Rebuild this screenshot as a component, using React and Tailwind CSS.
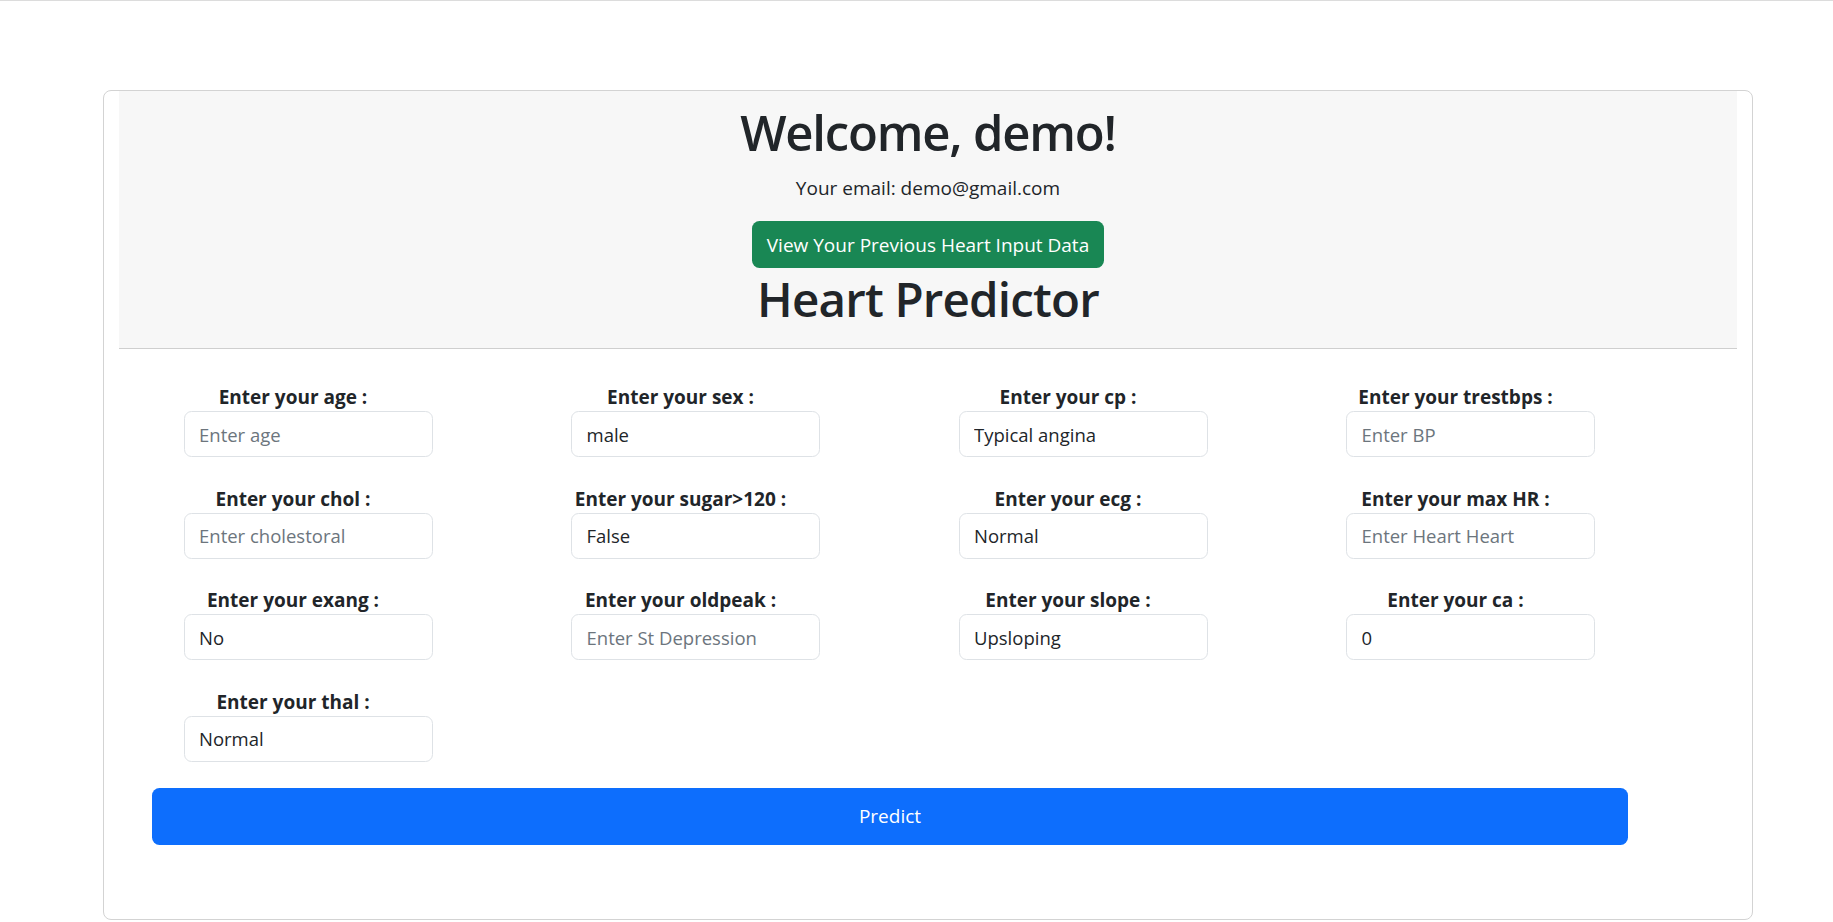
import React from 'react'

const fields = [
    { label: 'Enter your age :', placeholder: 'Enter age' },
    { label: 'Enter your sex :', value: 'male' },
    { label: 'Enter your cp :', value: 'Typical angina' },
    { label: 'Enter your trestbps :', placeholder: 'Enter BP' },
    { label: 'Enter your chol :', placeholder: 'Enter cholestoral' },
    { label: 'Enter your sugar>120 :', value: 'False' },
    { label: 'Enter your ecg :', value: 'Normal' },
    { label: 'Enter your max HR :', placeholder: 'Enter Heart Heart' },
    { label: 'Enter your exang :', value: 'No' },
    { label: 'Enter your oldpeak :', placeholder: 'Enter St Depression' },
    { label: 'Enter your slope :', value: 'Upsloping' },
    { label: 'Enter your ca :', value: '0' },
    { label: 'Enter your thal :', value: 'Normal' },
]

const Field = ({ label, value, placeholder }) => {
    return (
        <div className='flex flex-col'>
            <label className='w-[219px] pt-[3px] text-center font-bold text-[19px] leading-[28px] whitespace-nowrap'>{label}</label>
            <input
                readOnly
                value={value || ''}
                placeholder={placeholder}
                className='w-[249px] h-[46px] border border-[#dee2e6] rounded-[7.5px] pl-[14.5px] text-[18.5px] text-[#212529] placeholder:text-[#6c757d] bg-white outline-none'
            />
        </div>
    )
}

const App = () => {
    return (
        <div className='min-h-screen bg-white border-t border-[#dcdcdc] text-[#212529] pb-[40px]' style={{ fontFamily: '"Open Sans", "Noto Sans", sans-serif' }}>
            <div className='ml-[103px] mt-[89px] w-[1650px] border border-[#d3d3d3] rounded-[8px] px-[15px]'>
                {/* header */}
                <div className='bg-[#f7f7f7] border-b border-[#cfcfcf] flex flex-col items-center pt-[9px] pb-[19px]'>
                    <h1 className='text-[49px] leading-[65px] font-semibold tracking-[-1.2px]'>Welcome, demo!</h1>
                    <p className='text-[19px] leading-[30px] mt-[8px] mb-[18px]'>Your email: demo@gmail.com</p>
                    <button className='bg-[#198754] text-white text-[19px] leading-[30px] px-[15px] py-[8.5px] rounded-[7.5px]'>
                        View Your Previous Heart Input Data
                    </button>
                    <h1 className='mt-[1px] text-[47.5px] leading-[60px] font-semibold tracking-[-0.8px]'>Heart Predictor</h1>
                </div>

                {/* form */}
                <div className='pl-[33px] pt-[31px] pb-[73.5px]'>
                    <div className='ml-[31.5px] grid grid-cols-[repeat(4,387.5px)] gap-y-[24.5px]'>
                        {fields.map((f) => (
                            <Field key={f.label} {...f} />
                        ))}
                    </div>
                    <button className='mt-[26.5px] w-[1476px] h-[57px] bg-[#0d6efd] text-white text-[19px] rounded-[7.5px]'>
                        Predict
                    </button>
                </div>
            </div>
        </div>
    )
}

export default App
